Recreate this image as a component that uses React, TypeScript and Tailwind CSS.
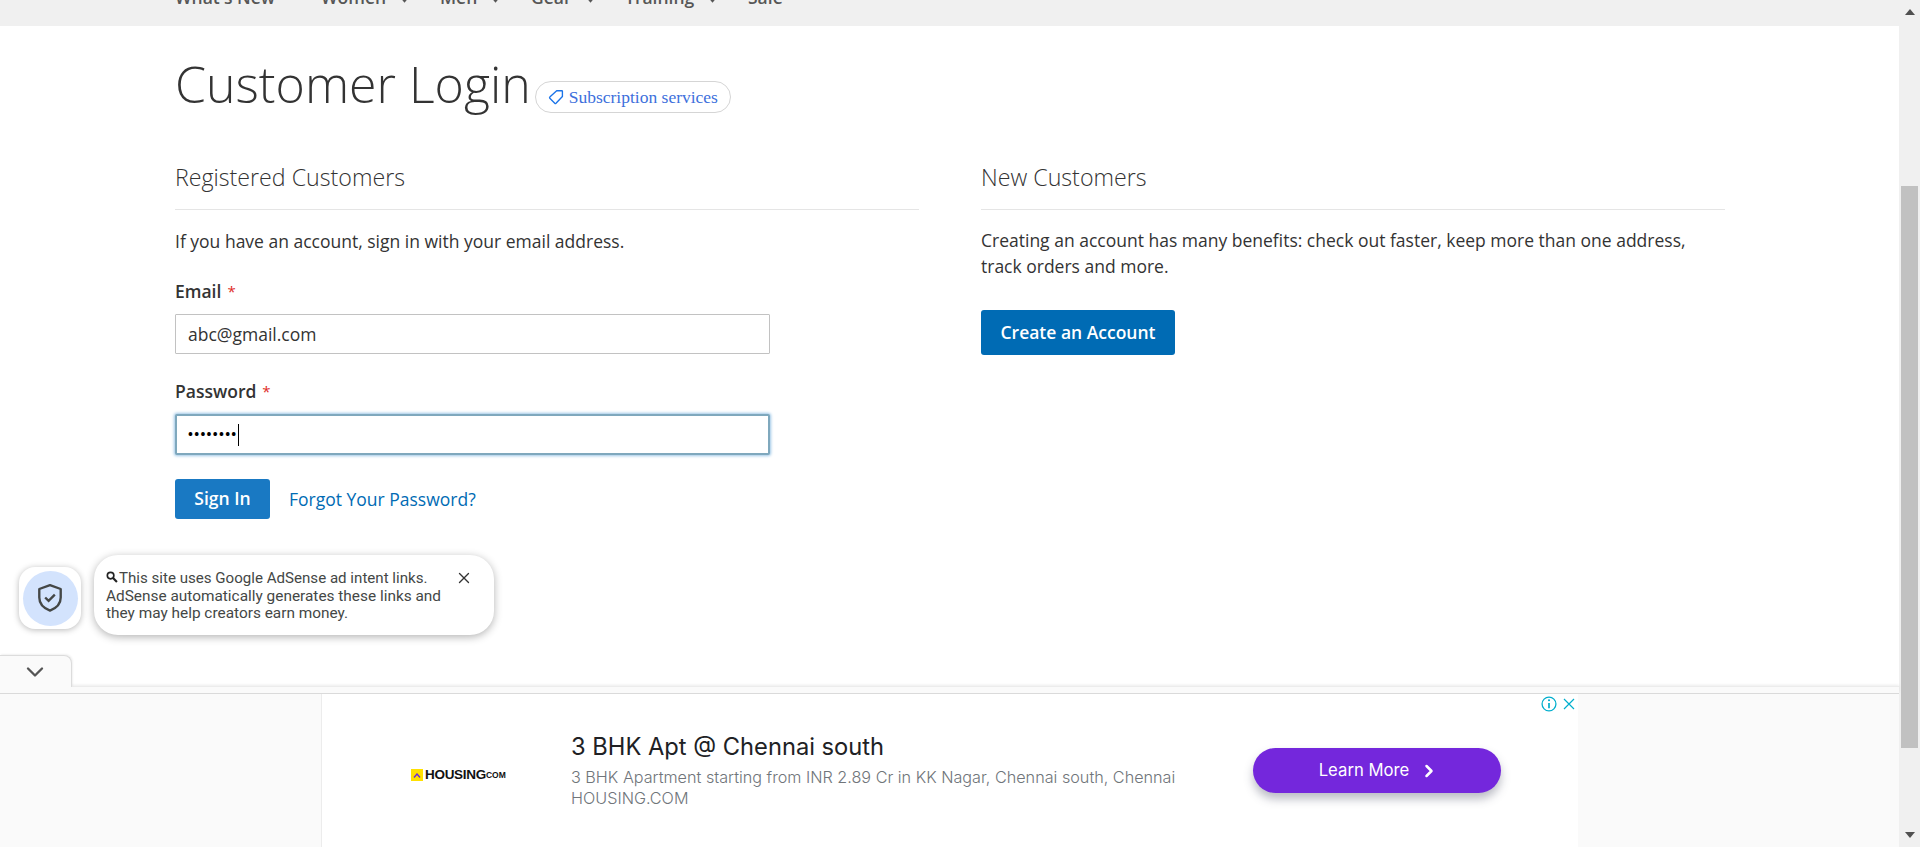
import React from "react";
import { ChevronDown, ChevronRight, X } from "lucide-react";

const open = "font-['Open_Sans',sans-serif]";

function NavItem({ label, caret, className }: { label: string; caret?: boolean; className: string }) {
  return (
    <div className={`flex items-center gap-[14px] ${className}`}>
      <span className="text-[17.5px] leading-[20px] font-semibold text-[#575757]">{label}</span>
      {caret && (
        <svg width="9" height="6" viewBox="0 0 8 5" className="mt-[6px]">
          <path d="M0 0h8L4 5z" fill="#575757" />
        </svg>
      )}
    </div>
  );
}

function Field({ label, value, focus, labelGap }: { label: string; value: React.ReactNode; focus?: boolean; labelGap: string }) {
  return (
    <div className="w-[595px]">
      <div className={`flex items-center ${labelGap} h-[20px] text-[17.5px] font-semibold text-[#333]`}>
        <span>{label}</span>
        <span className="text-[#e02b27] font-normal text-[15px]">*</span>
      </div>
      <div
        className={
          focus
            ? "mt-[13px] h-[41px] border-2 border-[#7fa8bd] rounded-[2px] bg-white flex items-center pl-[11px] text-[17.5px] text-black shadow-[0_0_3px_1px_#9cc6e6]"
            : "mt-[13px] h-[40px] border border-[#c2c2c2] rounded-[1px] bg-white flex items-center pl-[12px] text-[17.5px] text-[#333]"
        }
      >
        {value}
      </div>
    </div>
  );
}

export default function App() {
  return (
    <div className={`relative w-[1920px] h-[847px] overflow-hidden flex bg-white ${open}`}>
      <div className="w-[1899px] h-full flex flex-col">
        <nav className="h-[26px] bg-[#f0f0f0] relative overflow-hidden shrink-0">
          <div className="absolute left-0 top-[-13px] w-full h-[20px]">
            <NavItem label="What's New" className="absolute left-[175px]" />
            <NavItem label="Women" caret className="absolute left-[321px]" />
            <NavItem label="Men" caret className="absolute left-[440px]" />
            <NavItem label="Gear" caret className="absolute left-[531px]" />
            <NavItem label="Training" caret className="absolute left-[625px]" />
            <NavItem label="Sale" className="absolute left-[748px]" />
          </div>
        </nav>

        <main className="pl-[175px] pt-[27px]">
          <div className="flex items-end h-[62px]">
            <h1 className="text-[50px] leading-[62px] font-light text-[#333] whitespace-nowrap">Customer Login</h1>
            <a className="ml-[4px] mb-[2px] h-[32px] w-[196px] border border-[#d5d5d5] rounded-[16px] flex items-center pl-[11px] gap-[4px] font-['Liberation_Serif',serif] text-[17.5px] text-[#3d6fdc]">
              <svg width="18" height="18" viewBox="0 0 16 16" fill="none" stroke="#1a73e8" strokeWidth="1.2" strokeLinejoin="round" className="shrink-0">
                <path d="M8.600 2.400h4.600a.5.5 0 0 1 .5.5v4.600L8 13.600a.8.8 0 0 1-1.100 0L2.500 9.200a.8.8 0 0 1 0-1.100z" />
              </svg>
              <span className="whitespace-nowrap">Subscription services</span>
            </a>
          </div>

          <div className="flex gap-[62px] mt-[47px]">
            <section className="w-[744px]">
              <h2 className="text-[23.2px] leading-[30px] font-light text-[#333] pb-[17px] border-b border-[#e5e5e5]">Registered Customers</h2>
              <p className="mt-[18px] text-[17.5px] leading-[26px] text-[#333]">If you have an account, sign in with your email address.</p>
              <div className="mt-[27px] flex flex-col gap-[27px]">
                <Field label="Email" value="abc@gmail.com" labelGap="gap-[6px]" />
                <Field
                  label="Password"
                  focus
                  labelGap="gap-[6px]"
                  value={
                    <>
                      <span className="text-[13px] tracking-[1.300px] font-bold">••••••••</span>
                      <span className="w-px h-[22px] bg-black" />
                    </>
                  }
                />
              </div>
              <div className="mt-[24px] flex items-center gap-[19px]">
                <button className="w-[95px] h-[40px] rounded-[3px] bg-[#1979c3] text-white text-[17.5px] leading-[24px] pb-[2px] font-semibold">Sign In</button>
                <a className="text-[17.5px] leading-[24px] pb-[1px] text-[#006bb4]">Forgot Your Password?</a>
              </div>
            </section>

            <section className="w-[744px]">
              <h2 className="text-[23.2px] leading-[30px] font-light text-[#333] pb-[17px] border-b border-[#e5e5e5]">New Customers</h2>
              <p className="mt-[18px] text-[17.5px] leading-[25.5px] text-[#333]">
                Creating an account has many benefits: check out faster, keep more than one address,
                <br />
                track orders and more.
              </p>
              <button className="mt-[31px] w-[194px] h-[45px] rounded-[3px] bg-[#006bb4] text-white text-[17.5px] font-semibold">Create an Account</button>
            </section>
          </div>
        </main>
      </div>

      <div className="w-[21px] h-full bg-[#f0f0f0] flex flex-col items-center relative shrink-0">
        <svg width="10" height="6" viewBox="0 0 10 6" className="mt-[9px]">
          <path d="M5 0l5 6H0z" fill="#505050" />
        </svg>
        <div className="mt-[171px] w-[17px] h-[562px] bg-[#c1c1c1]" />
        <svg width="10" height="6" viewBox="0 0 10 6" className="mt-[84px]">
          <path d="M5 6L0 0h10z" fill="#505050" />
        </svg>
      </div>

      {/* AdSense notice */}
      <div className="absolute left-[19px] top-[567px] w-[62px] h-[62px] rounded-[16px] bg-white shadow-[0_1px_6px_rgba(0,0,0,0.28)] flex items-center justify-center">
        <div className="w-[55px] h-[55px] rounded-full bg-[#d3e3fd] flex items-center justify-center">
          <svg width="26" height="30" viewBox="0 0 24 28" fill="none">
            <path d="M12 2l10 3.600v8c0 5.800-4.200 10-10 12.200C6.200 23.600 2 19.400 2 13.600v-8z" stroke="#444746" strokeWidth="2.200" strokeLinejoin="round" />
            <path d="M7.500 13.500l3.200 3.200 5.800-5.800" stroke="#444746" strokeWidth="2.200" />
          </svg>
        </div>
      </div>
      <div className="absolute left-[94px] top-[555px] w-[400px] h-[80px] rounded-[24px] bg-white shadow-[0_2px_8px_rgba(0,0,0,0.3)] pl-[12px] pt-[15px] font-['Roboto',sans-serif] text-[15.4px] leading-[17.5px] text-[#444746]">
        <div className="flex items-center">
          <svg width="12" height="12" viewBox="0 0 11 11" fill="none" stroke="#222" className="-mt-[3px] mr-[1px] shrink-0">
            <circle cx="4.200" cy="4.200" r="3" strokeWidth="1.500" />
            <path d="M6.500 6.500L10 10" strokeWidth="2" />
          </svg>
          <span className="whitespace-nowrap text-[15.1px]">This site uses Google AdSense ad intent links.</span>
        </div>
        <div className="whitespace-nowrap">AdSense automatically generates these links and</div>
        <div className="whitespace-nowrap">they may help creators earn money.</div>
        <X size={18} strokeWidth={1.8} className="absolute left-[361px] top-[14px] text-[#333]" />
      </div>

      {/* Anchor ad */}
      <div className="absolute left-0 top-[655px] w-[1899px] h-[192px] font-['Inter',sans-serif]">
        <div className="absolute left-0 top-[31px] w-full h-[7px] bg-[#fafafa] border-t border-[#ececec] shadow-[0_-1px_3px_rgba(0,0,0,0.08)]" />
        <div className="absolute left-0 top-0 w-[72px] h-[32px] bg-[#fafafa] rounded-tr-[8px] border-r border-t border-[#dcdcdc] shadow-[1px_-1px_2px_rgba(0,0,0,0.06)] flex items-center justify-center">
          <ChevronDown size={28} strokeWidth={2} className="text-[#555] -ml-[2px]" />
        </div>
        <div className="absolute left-0 top-[38px] w-full h-[154px] bg-[#fafafa] border-t border-[#dadada] flex justify-center">
          <div className="relative w-[1257px] h-full bg-white border-l border-[#ececec]">
            <div className="absolute left-[89px] top-[71px] flex items-center">
              <div className="w-[12px] h-[12px] bg-[#ffe000] flex items-center justify-center">
                <svg width="8" height="5" viewBox="0 0 8 5" fill="none"><path d="M1 4.500L4 1l3 3.500" stroke="#6e2bd9" strokeWidth="1.400" /></svg>
              </div>
              <span className="ml-[2px] font-['Liberation_Sans',sans-serif] font-bold text-[13.5px] tracking-[-0.3px] text-[#111]">HOUSING</span>
              <span className="font-['Liberation_Sans',sans-serif] font-bold text-[8.5px] text-[#111] mt-[1px]">COM</span>
            </div>
            <div className="absolute left-[249px] top-[39px] text-[23.7px] leading-[28px] text-[#202124] whitespace-nowrap font-['Inter',sans-serif]">3 BHK Apt @ Chennai south</div>
            <div className="absolute left-[249px] top-[73px] text-[16.2px] leading-[21px] text-[#70757a] whitespace-nowrap font-['Inter',sans-serif] font-light">
              3 BHK Apartment starting from INR 2.89 Cr in KK Nagar, Chennai south, Chennai
              <br />
              HOUSING.COM
            </div>
            <button className="absolute left-[931px] top-[54px] w-[248px] h-[45px] rounded-[23px] bg-[#7427dc] text-white text-[16.7px] pl-[4px] flex items-center justify-center gap-[10px] shadow-[0_6px_10px_rgba(60,64,90,0.35)]">
              <span>Learn More</span>
              <ChevronRight size={20} strokeWidth={3} />
            </button>
            <div className="absolute right-[3px] top-[2px] flex items-center gap-[6px] text-[#00aecd]">
              <svg width="16" height="16" viewBox="0 0 15 15" fill="none" stroke="currentColor">
                <circle cx="7.500" cy="7.500" r="6.500" strokeWidth="1.200" />
                <path d="M7.500 6.500v5" strokeWidth="1.600" />
                <circle cx="7.500" cy="4" r="1" fill="currentColor" stroke="none" />
              </svg>
              <svg width="12" height="12" viewBox="0 0 12 12" fill="none" stroke="currentColor" strokeWidth="1.200">
                <path d="M1 1l10 10M11 1L1 11" />
              </svg>
            </div>
          </div>
        </div>
      </div>
    </div>
  );
}
